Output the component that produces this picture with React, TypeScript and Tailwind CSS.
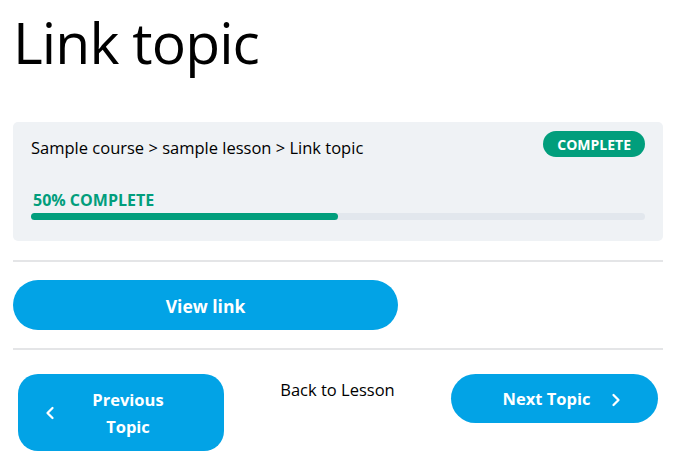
import { ChevronLeft, ChevronRight } from "lucide-react";

export default function App() {
  const progress = 50;

  return (
    <div className="min-h-[476px] bg-white font-['Open_Sans',sans-serif] text-black">
      <div className="ml-[13px] w-[650px]">
        {/* Title */}
        <h1 className="pt-[6px] text-[57px] font-normal leading-[72px] tracking-[-0.9px]">Link topic</h1>

        {/* Progress card */}
        <div className="mt-[44px] h-[119px] rounded-[5px] bg-[#eff2f5] px-[18px] pt-[9px]">
          <div className="flex items-start justify-between">
            <div className="pt-[6px] text-[16.5px] leading-[22px]">
              Sample course &gt; sample lesson &gt; Link topic
            </div>
            <span className="flex h-[26px] items-center rounded-full bg-[#019e7c] px-[14px] text-[14px] font-bold text-white">
              COMPLETE
            </span>
          </div>
          <div className="mt-[32px] pl-[2px] text-[16px] font-bold leading-[18px] text-[#019e7c]">
            {progress}% COMPLETE
          </div>
          <div className="mt-[4px] h-[7px] w-full rounded-full bg-[#e2e7ed]">
            <div className="h-full rounded-full bg-[#019e7c]" style={{ width: `${progress}%` }} />
          </div>
        </div>

        <div className="mt-[19px] h-[2px] bg-[#e4e5e7]" />

        {/* View link */}
        <div className="pt-[18px] pb-[18px]">
          <button className="h-[50px] w-[385px] rounded-full bg-[#02a3e6] pt-[3px] text-[17.5px] font-bold text-white">
            View link
          </button>
        </div>

        <div className="h-[2px] bg-[#e4e5e7]" />

        {/* Navigation */}
        <div className="flex items-start justify-between pl-[5px] pr-[5px] pt-[24px]">
          <button className="flex h-[77px] w-[206px] items-center rounded-[20px] bg-[#02a3e6] pl-[22px] text-white">
            <ChevronLeft size={20} strokeWidth={2.75} />
            <span className="ml-[12px] w-[112px] text-center text-[16.5px] font-bold leading-[27px]">
              Previous Topic
            </span>
          </button>
          <a className="mt-[5px] text-[16.5px] leading-[22px]">Back to Lesson</a>
          <button className="flex h-[49px] w-[207px] items-center justify-center rounded-full bg-[#02a3e6] pl-[20px] pt-[2px] text-white">
            <span className="text-[16.5px] font-bold">Next Topic</span>
            <ChevronRight size={20} strokeWidth={2.75} className="ml-[16px]" />
          </button>
        </div>
      </div>
    </div>
  );
}
